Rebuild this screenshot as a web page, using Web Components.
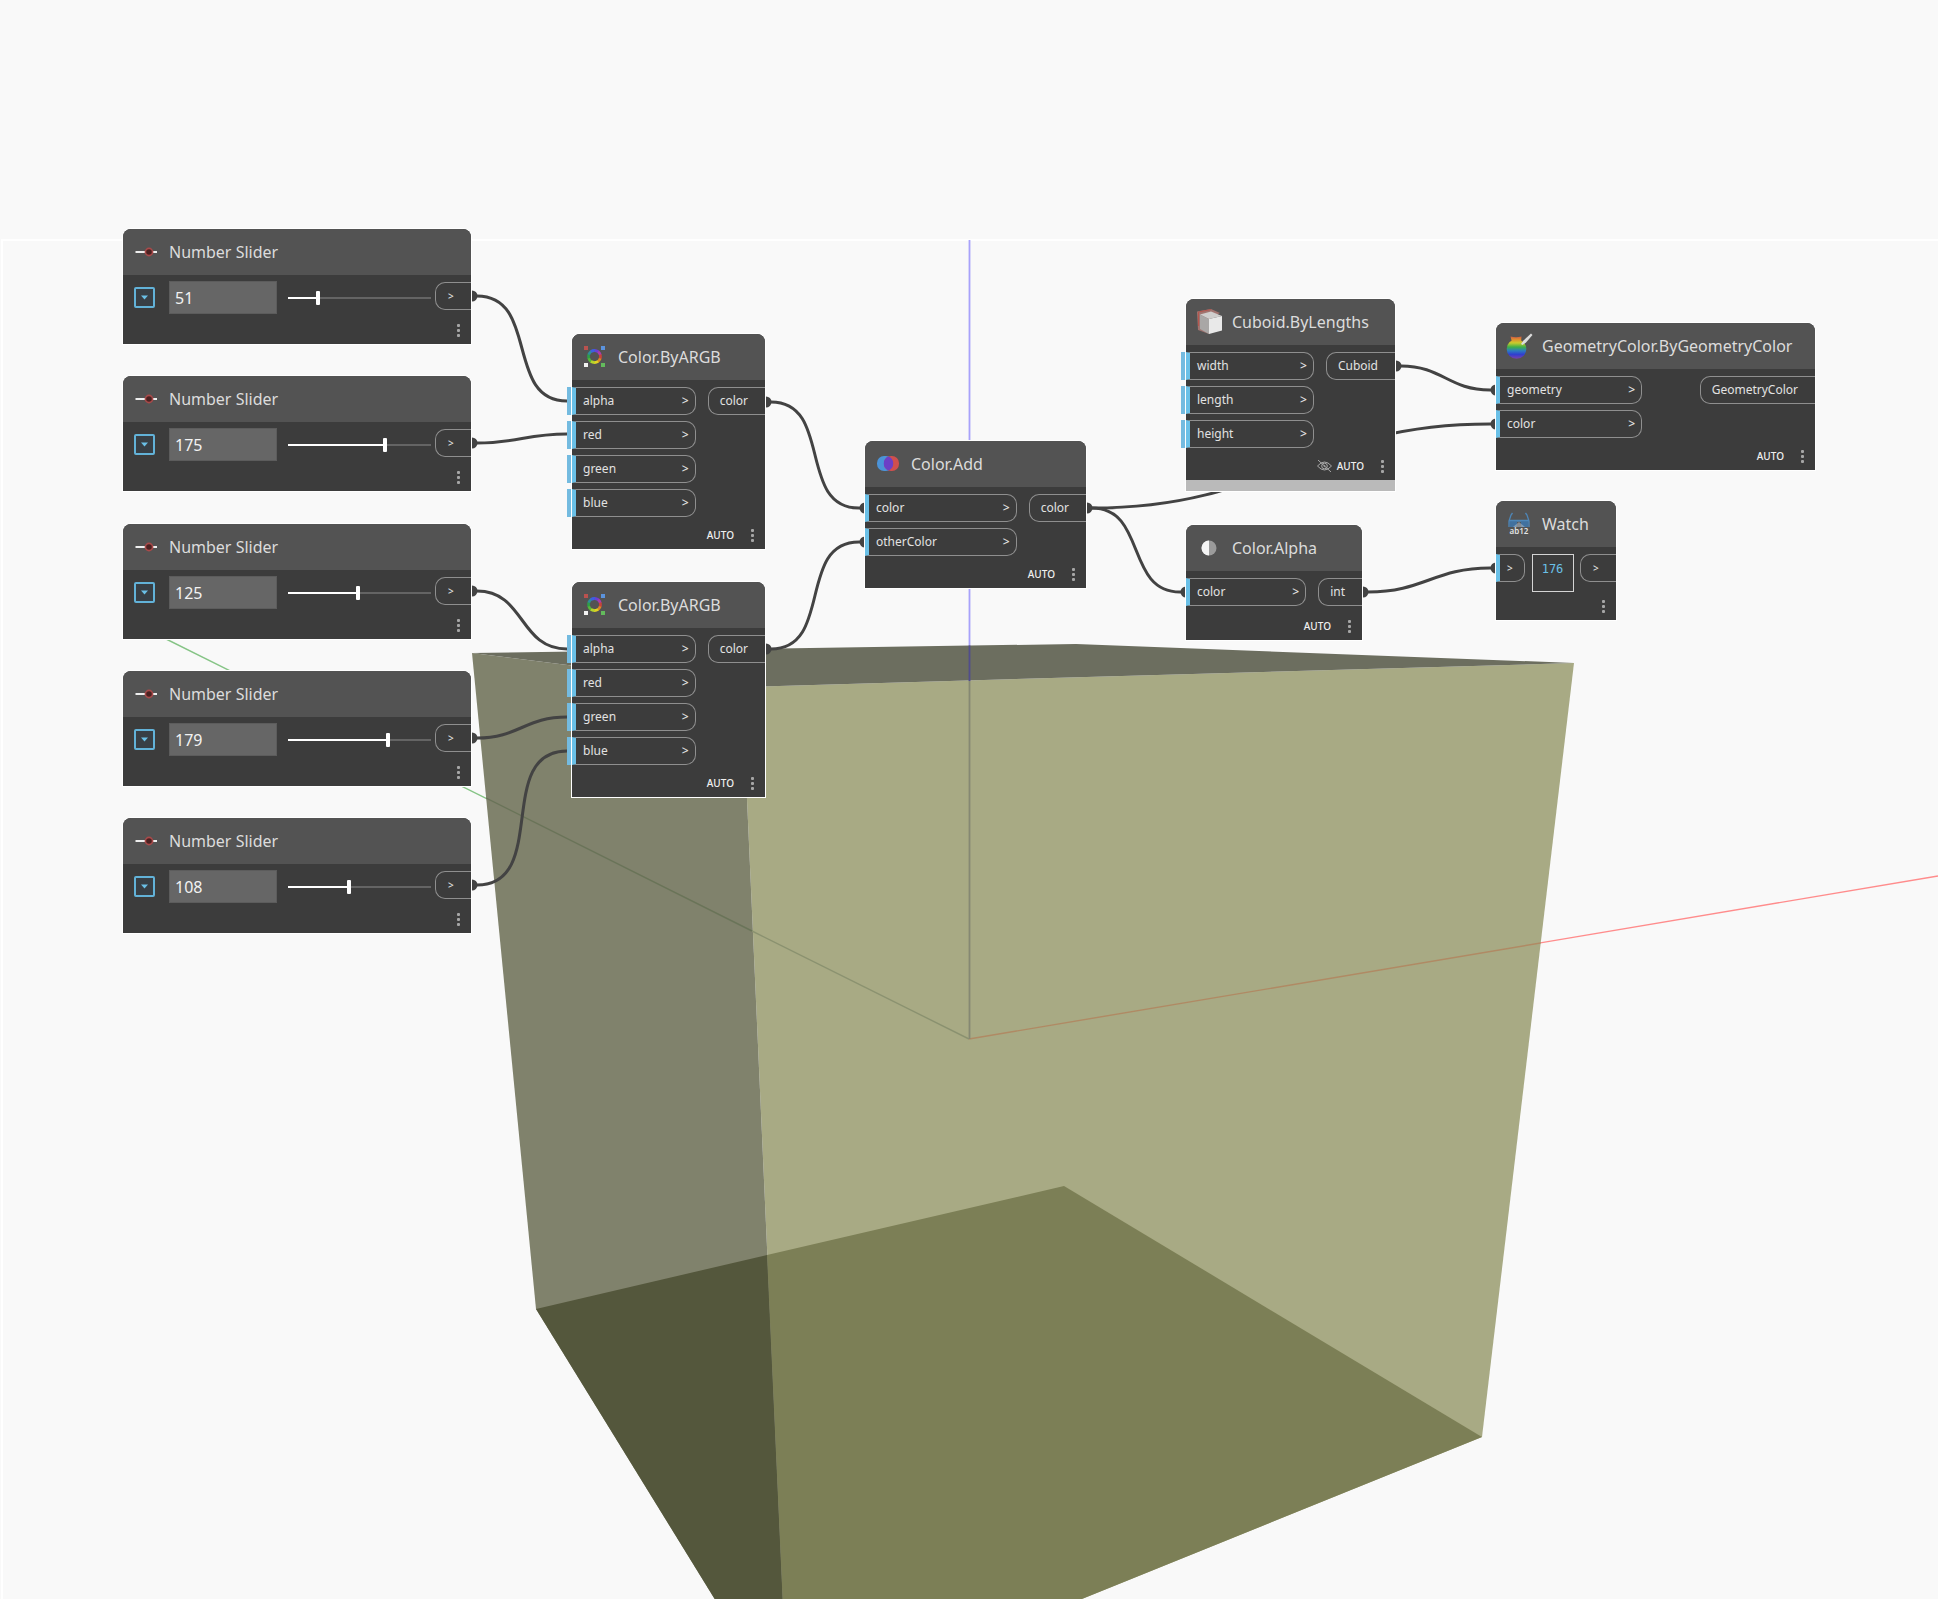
<!DOCTYPE html>
<html lang="en">
<head>
<meta charset="utf-8">
<title>Graph workspace</title>
<style>
  html, body { margin: 0; height: 100%; }
  body { background: #f9f9f9; font-family: "Noto Sans", sans-serif; overflow: hidden; }
</style>
</head>
<body>
<graph-workspace>
  <preview-scene slot="scene"></preview-scene>
  <graph-wires slot="wires"></graph-wires>

  <number-slider value="51" style="--x:123px;--y:229px"></number-slider>
  <number-slider value="175" style="--x:123px;--y:376px"></number-slider>
  <number-slider value="125" style="--x:123px;--y:524px"></number-slider>
  <number-slider value="179" style="--x:123px;--y:671px"></number-slider>
  <number-slider value="108" style="--x:123px;--y:818px"></number-slider>

  <graph-node name="Color.ByARGB" lacing="AUTO" style="--x:572px;--y:334px;--w:193px">
    <node-icon slot="icon" kind="argb"></node-icon>
    <in-port slot="in" optional>alpha</in-port>
    <in-port slot="in" optional>red</in-port>
    <in-port slot="in" optional>green</in-port>
    <in-port slot="in" optional>blue</in-port>
    <out-port slot="out">color</out-port>
  </graph-node>

  <graph-node name="Color.ByARGB" lacing="AUTO" style="--x:572px;--y:582px;--w:193px">
    <node-icon slot="icon" kind="argb"></node-icon>
    <in-port slot="in" optional>alpha</in-port>
    <in-port slot="in" optional>red</in-port>
    <in-port slot="in" optional>green</in-port>
    <in-port slot="in" optional>blue</in-port>
    <out-port slot="out">color</out-port>
  </graph-node>

  <graph-node name="Color.Add" lacing="AUTO" style="--x:865px;--y:441px;--w:221px">
    <node-icon slot="icon" kind="add"></node-icon>
    <in-port slot="in">color</in-port>
    <in-port slot="in">otherColor</in-port>
    <out-port slot="out">color</out-port>
  </graph-node>

  <graph-node name="Cuboid.ByLengths" lacing="AUTO" hidden-preview style="--x:1186px;--y:299px;--w:209px">
    <node-icon slot="icon" kind="cuboid"></node-icon>
    <in-port slot="in" optional>width</in-port>
    <in-port slot="in" optional>length</in-port>
    <in-port slot="in" optional>height</in-port>
    <out-port slot="out">Cuboid</out-port>
  </graph-node>

  <graph-node name="Color.Alpha" lacing="AUTO" style="--x:1186px;--y:525px;--w:176px">
    <node-icon slot="icon" kind="alpha"></node-icon>
    <in-port slot="in">color</in-port>
    <out-port slot="out">int</out-port>
  </graph-node>

  <graph-node name="GeometryColor.ByGeometryColor" lacing="AUTO" style="--x:1496px;--y:323px;--w:319px;--in:146px">
    <node-icon slot="icon" kind="geometry"></node-icon>
    <in-port slot="in">geometry</in-port>
    <in-port slot="in">color</in-port>
    <out-port slot="out">GeometryColor</out-port>
  </graph-node>

  <watch-node value="176" style="--x:1496px;--y:501px"></watch-node>
</graph-workspace>

<script>
  function define(name, html, setup) {
    const template = document.createElement('template');
    template.innerHTML = html;
    customElements.define(name, class extends HTMLElement {
      constructor() {
        super();
        this.attachShadow({ mode: 'open' }).append(template.content.cloneNode(true));
      }
      connectedCallback() {
        if (setup && !this.ready) { this.ready = true; setup(this, this.shadowRoot); }
      }
    });
  }

  define('graph-workspace', `
    <style>
      :host { display: block; position: relative; height: 100%; min-height: 100vh; overflow: hidden; }
      ::slotted(preview-scene), ::slotted(graph-wires) { position: absolute; inset: 0; }
      /* nodes sit freely on the canvas */
      ::slotted(graph-node), ::slotted(number-slider), ::slotted(watch-node) {
        position: absolute; left: var(--x); top: var(--y);
      }
    </style>
    <slot name="scene"></slot><slot name="wires"></slot><slot></slot>`);

  define('preview-scene', `
    <style>
      :host { display: block; }
      svg { display: block; width: 100%; height: 100%; }
    </style>
    <svg aria-hidden="true">
      <defs>
        <clipPath id="outline"><polygon points="472,653 1076,644 1574,663 1482,1437 788,1718 536,1309"/></clipPath>
      </defs>
      <rect x="2" y="240" width="100%" height="100%" fill="none" stroke="#fff" stroke-width="2"/>
      <g fill="none" stroke-width="1.4">
        <path d="M150 631 969 1039" stroke="#86c486"/>
        <path d="M969 1039 1938 876" stroke="#ff8c8c"/>
        <path d="M969.5 240V1039" stroke="#a8a2fb" stroke-width="1.8"/>
      </g>
      <polygon points="742,687 1574,663 1482,1437 788,1718" fill="#a8aa84"/>
      <polygon points="472,653 742,687 788,1718 536,1309" fill="#80826c"/>
      <polygon points="472,653 1076,644 1574,663 742,687" fill="#6c6e5f"/>
      <polygon points="767,1255 1064,1186 1482,1437 788,1718" fill="#7c7f56"/>
      <polygon points="536,1309 767,1255 788,1718" fill="#54573c"/>
      <g fill="none" stroke-width="1.4" clip-path="url(#outline)">
        <path d="M472 791 752 931" stroke="#6a7459"/>
        <path d="M752 931 969 1039" stroke="#8b9270"/>
        <path d="M969 1039 1600 933" stroke="#b08a64"/>
        <path d="M969.5 643V681" stroke="#514d8c" stroke-width="1.8"/>
        <path d="M969.5 681V1039" stroke="#858873" stroke-width="1.8"/>
      </g>
    </svg>`);

  define('graph-wires', `
    <style>
      :host { display: block; }
      svg { display: block; width: 100%; height: 100%; }
      path { fill: none; stroke: #434343; stroke-width: 3; }
      circle { fill: #434343; }
    </style>
    <svg aria-hidden="true"></svg>`, (host, root) => {
    const wires = [
      [477, 296, 567, 401], [477, 443, 567, 434], [477, 591, 567, 649],
      [477, 738, 567, 717], [477, 885, 567, 751],
      [771, 402, 859, 508], [771, 649, 859, 542],
      [1092, 508, 1490, 424], [1092, 508, 1180, 592],
      [1401, 366, 1490, 390], [1368, 592, 1490, 568]
    ];
    const dots = [
      [472, 296], [472, 443], [472, 591], [472, 738], [472, 885],
      [766, 402], [766, 649], [865, 508], [865, 542], [1087, 508],
      [1396, 366], [1186, 592], [1363, 592], [1496, 390], [1496, 424], [1496, 568]
    ];
    root.querySelector('svg').innerHTML =
      wires.map(([x1, y1, x2, y2]) => {
        const reach = 0.45 * Math.hypot(x2 - x1, y2 - y1);
        return `<path d="M${x1 - 4} ${y1}H${x1}C${x1 + reach} ${y1} ${x2 - reach} ${y2} ${x2} ${y2}h3"/>`;
      }).join('') +
      dots.map(([x, y]) => `<circle cx="${x}" cy="${y}" r="5.5"/>`).join('');
  });

  const ring = (() => {
    const colors = ['#6a3fd6', '#a83cae', '#c8443c', '#dd8a24', '#e0d322', '#b6d42c', '#58b83a', '#2f9e4a', '#2f8f9a', '#3d5fe0'];
    const step = 2 * Math.PI / colors.length, p = a => (11.5 + 6 * Math.sin(a)) + ' ' + (11.5 - 6 * Math.cos(a));
    return colors.map((c, i) =>
      `<path d="M${p(i * step)}A6 6 0 0 1 ${p((i + 1.1) * step)}" fill="none" stroke="${c}" stroke-width="2.8"/>`).join('');
  })();

  const icons = {
    slider: `<path d="M1.5 12h21.500" stroke="#eee" stroke-width="2"/>
      <circle cx="15" cy="12" r="3.600" fill="#4c2222" stroke="#a84a4a" stroke-width="1.600"/>`,
    argb: `<path fill="#b9524f" d="M1 1h4v4H1z"/><path fill="#5b93dd" d="M18 1h4v4h-4z"/>
      <path fill="#f2f2f2" d="M1 18h4v4H1z"/><path fill="#63bb5c" d="M18 18h4v4h-4z"/>${ring}`,
    add: `<rect x="1" y="4" width="16" height="15" rx="7" fill="#4b93d8"/>
      <rect x="8" y="4" width="15" height="15" rx="7" fill="#cf4f4e"/>
      <path d="M12.500 4.600a7.400 7.400 0 0 1 0 13.800a7.400 7.400 0 0 1 0-13.800z" fill="#6c3fc6"/>`,
    cuboid: `<path d="M0 1.500 14-1l9 4-10 5-1 16-11-4z" fill="#a07470"/>
      <path d="M1.500 2v14M1.500 2 14-.5" stroke="#b5564e" fill="none"/>
      <path d="M3 4.500 14 1.500 25 6 12 9z" fill="#d0cecd"/><path d="M3 4.500 12 9v15L3 19z" fill="#a9a7a6"/>
      <path d="M12 9 25 6v14.500L12 24z" fill="#e9e9e9"/>`,
    alpha: `<circle cx="12" cy="12" r="7.500" fill="#9b9b9b"/><path d="M12 4.500a7.500 7.500 0 0 0 0 15z" fill="#f4f4f4"/>`,
    geometry: `<defs><linearGradient id="g" gradientUnits="userSpaceOnUse" x1="0" y1="2" x2="0" y2="25">
      <stop offset="0" stop-color="#c8524a"/><stop offset=".14" stop-color="#e08a30"/><stop offset=".3" stop-color="#c8cc2c"/>
      <stop offset=".48" stop-color="#3cb048"/><stop offset=".64" stop-color="#2c7cc0"/><stop offset=".8" stop-color="#2f3fd0"/>
      <stop offset="1" stop-color="#8040a8"/></linearGradient></defs>
      <path d="M3.500 2.500Q9 4 14.500 2.500L14 8H5z" fill="url(#g)"/><circle cx="9.500" cy="15" r="9.800" fill="url(#g)"/>
      <path d="M14 10 16.500 6.500l7.500-7 1.500 1.500-6.500 7.500-3.500 2.500z" fill="#dcdcdc"/>`,
    watch: `<g fill="#41719f"><path d="M2 8h8.500l-1 7H3zM13.500 8H22l-1 7h-6.500z"/></g>
      <g fill="none" stroke="#4d86b8" stroke-width="1.300"><path d="M5.500 1 4 3 2 9v6M18.500 1 20 3l2 6v6M10 9h4M2 8.500h20"/></g>
      <path d="M6 15l6-5 6 5z" fill="#b9c6d2" opacity=".5"/>
      <text x="12" y="22" text-anchor="middle" font-size="8" font-weight="600" fill="#e4e4e4">ab12</text>`
  };

  define('node-icon', `
    <style>
      :host { display: block; width: 24px; height: 24px; flex: none; }
      svg { display: block; width: 24px; height: 24px; overflow: visible; }
    </style>
    <svg viewBox="0 0 24 24" aria-hidden="true"></svg>`,
    (host, root) => { root.querySelector('svg').innerHTML = icons[host.getAttribute('kind')]; });

  define('in-port', `
    <style>
      :host { display: flex; position: relative; box-sizing: border-box; height: 28px;
        align-items: center; justify-content: space-between; padding: 0 6px 0 7px;
        border: 1px solid #8f8f8f; border-left: 4px solid #6ac0e7; border-radius: 0 10px 10px 0;
        color: #e2e2e2; font-size: 12px; line-height: 16px; }
      /* marks an input that falls back to its default value */
      :host([optional])::before { content: ""; position: absolute; left: -9px; top: -1px; width: 4px; height: 28px; background: #74bbe0; }
      b { font-weight: 500; }
    </style>
    <slot></slot><b>&gt;</b>`);

  define('out-port', `
    <style>
      :host { display: flex; box-sizing: border-box; height: 28px; flex: none; align-items: center;
        padding: 0 17px 0 11px; border: 1px solid #8f8f8f; border-right: 0; border-radius: 10px 0 0 10px;
        color: #e2e2e2; font-size: 12px; line-height: 16px; }
      :host([plain]) { width: 36px; padding: 0 0 0 12px; font-size: 10px; font-weight: 500; }
    </style>
    <slot></slot>`);

  define('node-menu', `
    <style>
      :host { display: block; }
      button { display: flex; flex-direction: column; align-items: center; justify-content: space-between;
        width: 15px; height: 15px; padding: 1px 0; border: 0; background: none; }
      i { width: 3px; height: 3px; border-radius: 1px; background: #a6a6a6; }
    </style>
    <button type="button" aria-label="Node options"><i></i><i></i><i></i></button>`);

  define('graph-node', `
    <style>
      :host { display: flex; flex-direction: column; width: var(--w); min-height: 115px;
        background: #3c3c3c; border-radius: 8px 8px 0 0; box-shadow: 0 0 0 1px #fff; }
      header { display: flex; align-items: center; gap: 11px; height: 46px; padding: 0 11px;
        background: #535353; border-radius: 8px 8px 0 0; }
      h2 { margin: 0; color: #dcdcdc; font-size: 16px; line-height: 24px; font-weight: 400; white-space: nowrap; }
      .ports { display: flex; justify-content: space-between; align-items: flex-start; gap: 12px; padding: 7px 0 4px; }
      .in { display: flex; flex-direction: column; gap: 6px; flex: 0 1 var(--in, 100%); }
      footer { display: flex; align-items: center; justify-content: flex-end; gap: 11px; height: 28px;
        margin-top: auto; padding-right: 5px; color: #f0f0f0; font-size: 10px; line-height: 14px; font-weight: 500; }
      .lacing { display: flex; align-items: center; gap: 5px; }
      .eye { display: none; flex: none; width: 15px; height: 12px; }
      .strip { display: none; height: 11px; background: #bababa; }
      :host([hidden-preview]) .eye, :host([hidden-preview]) .strip { display: block; }
      :host([custom]) .ports { display: none; }
    </style>
    <header><slot name="icon"></slot><h2></h2></header>
    <slot></slot>
    <div class="ports"><div class="in"><slot name="in"></slot></div><slot name="out"></slot></div>
    <footer>
      <span class="lacing">
        <svg class="eye" viewBox="0 0 15 12" fill="none" stroke="#a8a8a8" role="img" aria-label="Preview off">
          <path d="M.5 6Q7.500-2 14.500 6 7.500 14 .5 6z"/><circle cx="7.500" cy="6" r="2.800"/><circle cx="7.500" cy="6" r=".6"/><path d="M1 0l13 12"/>
        </svg>
        <span id="lacing"></span>
      </span>
      <node-menu></node-menu>
    </footer>
    <div class="strip"></div>`, (host, root) => {
    root.querySelector('h2').textContent = host.getAttribute('name');
    root.getElementById('lacing').textContent = host.getAttribute('lacing') || '';
  });

  define('number-slider', `
    <style>
      :host { display: block; width: 348px; }
      graph-node { --w: 100%; }
      .row { display: flex; align-items: center; height: 31px; padding: 7px 0 0 11px; }
      button { display: flex; align-items: center; justify-content: center; width: 21px; height: 21px; flex: none;
        margin-right: 14px; padding: 0; border: 2px solid #62b2d8; border-radius: 2px; background: #383f45; }
      input { margin: 0; font-family: inherit; }
      .value { box-sizing: border-box; width: 108px; height: 33px; margin-right: 11px; padding: 0 5px;
        border: 1px solid #5c5c5c; background: #666; color: #f2f2f2; font-size: 16px; }
      .range { appearance: none; flex: 1; min-width: 0; height: 14px; margin-right: 4px; background: none; }
      .range::-webkit-slider-runnable-track { height: 2px;
        background: linear-gradient(90deg, #fff var(--at), #646464 var(--at)); }
      .range::-webkit-slider-thumb { appearance: none; width: 4px; height: 14px; margin-top: -6px; background: #fff; border-radius: 1px; }
      out-port { align-self: flex-start; }
    </style>
    <graph-node name="Number Slider" custom>
      <node-icon slot="icon" kind="slider"></node-icon>
      <div class="row">
        <button type="button" aria-label="Slider range"><svg width="7" height="5" viewBox="0 0 7 5"><path d="M0 .5h7L3.500 4.500z" fill="#6ac0e7"/></svg></button>
        <input class="value" type="text" aria-label="Value">
        <input class="range" type="range" min="0" max="255" aria-label="Slider">
        <out-port plain>&gt;</out-port>
      </div>
    </graph-node>`, (host, root) => {
    const text = root.querySelector('.value'), range = root.querySelector('.range');
    const show = v => { text.value = v; range.value = v; range.style.setProperty('--at', v / 2.55 + '%'); };
    range.addEventListener('input', () => show(range.value));
    text.addEventListener('change', () => show(text.value));
    show(host.getAttribute('value'));
  });

  define('watch-node', `
    <style>
      :host { display: block; width: 120px; }
      graph-node { --w: 100%; }
      .row { display: flex; align-items: flex-start; justify-content: space-between; padding-top: 7px; }
      in-port { width: 29px; font-size: 10px; }
      output { box-sizing: border-box; width: 42px; height: 38px; padding-top: 6px; border: 1px solid #d4d4d4;
        color: #6ac0e7; font: 12px/16px "DejaVu Sans Mono", monospace; text-align: center; }
    </style>
    <graph-node name="Watch" custom>
      <node-icon slot="icon" kind="watch"></node-icon>
      <div class="row"><in-port></in-port><output></output><out-port plain>&gt;</out-port></div>
    </graph-node>`, (host, root) => { root.querySelector('output').textContent = host.getAttribute('value'); });
</script>
</body>
</html>
